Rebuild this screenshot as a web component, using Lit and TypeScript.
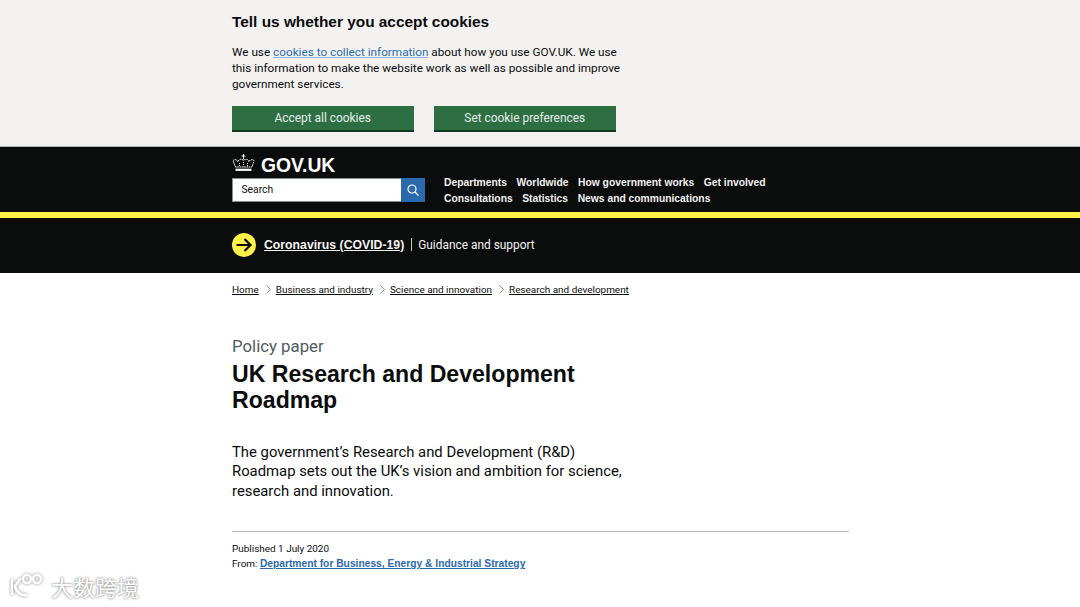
import { LitElement, html, css, svg } from "lit";
import { customElement } from "lit/decorators.js";

const crumbs = ["Home", "Business and industry", "Science and innovation", "Research and development"];
const nav1 = ["Departments", "Worldwide", "How government works", "Get involved"];
const nav2 = ["Consultations", "Statistics", "News and communications"];

@customElement("app-root")
export class AppRoot extends LitElement {
  static styles = css`
    :host { display: block; position: relative; width: 1080px; height: 607px; overflow: hidden; background: #fff; color: #0b0c0c; font-family: Roboto, sans-serif; }
    .wrap { width: 617px; margin-left: 232px; }
    .cookie { background: #f3f2f1; height: 146px; border-bottom: 1px solid #b1b4b6; box-sizing: content-box; }
    .cookie .wrap { padding-top: 12px; }
    h2 { margin: 0; font: bold 15.4px/20px "Liberation Sans", sans-serif; }
    .cookie p { margin: 12px 0 0; width: 392px; font-size: 11.75px; line-height: 16px; }
    .cookie a { color: #2b6cb0; text-decoration-color: #8fb0d8; }
    .btns { display: flex; gap: 20.5px; margin-top: 14px; }
    .btn { width: 181.5px; height: 24px; background: #2d6e43; box-shadow: 0 2px 0 #0f3a20; color: #e6eee8; font-size: 11.9px; display: flex; align-items: center; justify-content: center; }
    .head { background: #0b0c0c; height: 64px; }
    .head .wrap { display: flex; flex-direction: column; padding-top: 6px; }
    .logo { display: flex; align-items: center; gap: 6px; height: 25px; color: #fff; font: bold 19.3px/25px "Liberation Sans", sans-serif; }
    .logo svg { margin-bottom: 5px; }
    .row { display: flex; }
    .search { display: flex; width: 193px; height: 24px; }
    .search .in { flex: 1; background: #fff; border: 1px solid #8a8d8f; border-right: 0; font-size: 10.3px; line-height: 21px; padding-left: 8.5px; color: #0b0c0c; }
    .search .go { width: 24px; background: #2b69ad; display: flex; align-items: center; justify-content: center; }
    nav { margin: -3px 0 0 19px; font: bold 10.3px/15.5px "Liberation Sans", sans-serif; color: #f3f2f1; }
    nav div { display: flex; gap: 9.6px; }
    .stripe { height: 6px; background: #fff04a; border-top: 1px solid #0b0c0c; box-sizing: content-box; }
    .covid { background: #0b0c0c; height: 55px; color: #f3f2f1; }
    .covid .wrap { height: 53px; display: flex; align-items: center; }
    .covid b { margin-left: 8px; font: bold 12.25px "Liberation Sans", sans-serif; text-decoration: underline; }
    .covid i { width: 1px; height: 13px; background: #c8c8c8; margin: 0 6.5px; }
    .covid span { font-size: 11.9px; }
    .crumbs { display: flex; align-items: center; height: 32px; font-size: 9.95px; }
    .crumbs a { text-decoration: underline; white-space: nowrap; }
    .crumbs svg { margin: 0 5px 0 7px; }
    .kind { margin-top: 31px; color: #505a5f; font-size: 16.8px; line-height: 20px; }
    h1 { margin: 5px 0 0; width: 400px; font: bold 23.1px/26px "Liberation Sans", sans-serif; }
    .lead { margin: 30px 0 0; width: 400px; font-size: 14.85px; line-height: 19.4px; }
    .meta { margin-top: 30px; border-top: 1px solid #b9bcbe; padding-top: 9px; font-size: 9.95px; line-height: 15px; }
    .meta a { color: #2b69ad; font: bold 10.25px "Liberation Sans", sans-serif; text-decoration: underline; }
    .mark { position: absolute; left: 9px; top: 573px; display: flex; align-items: center; gap: 6px; color: #fff; font: 22px/26px "Noto Sans CJK SC", sans-serif; text-shadow: 0 0 2px #8a8a8a, 0 0 3px #aaa; }
    .mark svg { filter: drop-shadow(0 0 1.5px #888); }
  `;

  crown() {
    return svg`<svg width="23" height="18" viewBox="0 0 23 18" fill="none" stroke="#fff" stroke-width="1">
      <path d="M11.5 0v5.5M9.5 2h4"/>
      <path d="M3.5 13 1 6.6c2-1.8 4.4-.8 5 1.2.6-2.6 3-3.4 5.5-1.4 2.5-2 4.9-1.2 5.5 1.4.6-2 3-3 5-1.2L20 13z" stroke-dasharray="1.6 .7"/>
      <path d="M3.5 15.8h16" stroke-width="2.2"/>
      <path d="M7.5 9v3.5M11.5 8v4.5M15.5 9v3.5" stroke-dasharray="1 1"/>
    </svg>`;
  }

  render() {
    return html`
      <section class="cookie"><div class="wrap">
        <h2>Tell us whether you accept cookies</h2>
        <p>We use <a href="#">cookies to collect information</a> about how you use GOV.UK. We use this information to make the website work as well as possible and improve government services.</p>
        <div class="btns"><div class="btn">Accept all cookies</div><div class="btn">Set cookie preferences</div></div>
      </div></section>
      <header class="head"><div class="wrap">
        <div class="logo">${this.crown()}<span>GOV.UK</span></div>
        <div class="row">
          <div class="search"><div class="in">Search</div><div class="go">
            <svg width="14" height="14" viewBox="0 0 14 14" fill="none" stroke="#fff" stroke-width="1.2"><circle cx="6" cy="6" r="4"/><path d="M9 9l3.6 3.6"/></svg>
          </div></div>
          <nav><div>${nav1.map((n) => html`<span>${n}</span>`)}</div><div>${nav2.map((n) => html`<span>${n}</span>`)}</div></nav>
        </div>
      </div></header>
      <div class="stripe"></div>
      <section class="covid"><div class="wrap">
        <svg width="24" height="24" viewBox="0 0 24 24"><circle cx="12" cy="12" r="12" fill="#fff04a"/><path d="M4.5 12h14M12.5 6l6 6-6 6" fill="none" stroke="#0b0c0c" stroke-width="2.2"/></svg>
        <b>Coronavirus (COVID-19)</b><i></i><span>Guidance and support</span>
      </div></section>
      <main class="wrap">
        <div class="crumbs">${crumbs.map((c, i) => html`${i ? html`<svg width="5" height="9" viewBox="0 0 5 9" fill="none" stroke="#8a8d8f"><path d="M.5.5l4 4-4 4"/></svg>` : ""}<a>${c}</a>`)}</div>
        <div class="kind">Policy paper</div>
        <h1>UK Research and Development Roadmap</h1>
        <p class="lead">The government’s Research and Development (R&amp;D) Roadmap sets out the UK’s vision and ambition for science, research and innovation.</p>
        <div class="meta"><div>Published 1 July 2020</div><div>From: <a>Department for Business, Energy &amp; Industrial Strategy</a></div></div>
      </main>
      <div class="mark">
        <svg width="36" height="26" viewBox="0 0 36 26" fill="none" stroke="#fff" stroke-width="2.6">
          <path d="M3 6v16M12 5l-6 8c1 6 6 10 12 9"/><circle cx="18" cy="6" r="4"/><circle cx="28" cy="6" r="4"/>
        </svg>
        <span>大数跨境</span>
      </div>
    `;
  }
}
